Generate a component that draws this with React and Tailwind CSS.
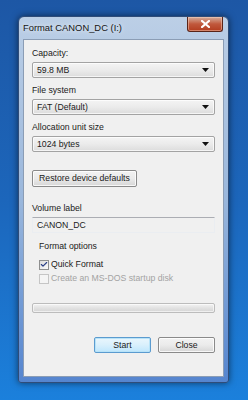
import { Check } from 'lucide-react';

const font = { fontFamily: '"Liberation Sans", Arial, sans-serif' };

const Label = ({ children, className = '' }) => (
    <div className={`h-[11px] leading-[11px] text-[8.7px] text-[#1a1a1a] whitespace-nowrap ${className}`}>
        {children}
    </div>
);

const Select = ({ value }) => (
    <div className="mt-[3px] h-[16px] flex items-center justify-between pl-[4px] pr-[5px] border border-[#a3a3a3] rounded-[2px] bg-gradient-to-b from-[#f4f4f4] via-[#ebebeb] to-[#dcdcdc] shadow-[inset_0_0_0_1px_rgba(255,255,255,0.7)]">
        <span className="text-[8.7px] leading-[11px] text-[#1a1a1a]">{value}</span>
        <svg width="7" height="4" viewBox="0 0 7 4">
            <path d="M0 0h7L3.5 4z" fill="#111" />
        </svg>
    </div>
);

const Button = ({ children, primary, className = '' }) => (
    <div
        className={`h-[16px] flex items-center justify-center rounded-[2px] border text-[8.7px] leading-[11px] text-[#1a1a1a] ${
            primary
                ? 'border-[#5b9bcf] bg-gradient-to-b from-[#eaf6fd] via-[#d9f0fc] to-[#bee6fd] shadow-[inset_0_0_0_1px_#b8e3f8]'
                : 'border-[#8a8a8a] bg-gradient-to-b from-[#f2f2f2] via-[#ebebeb] to-[#d6d6d6] shadow-[inset_0_0_0_1px_rgba(255,255,255,0.8)]'
        } ${className}`}
    >
        {children}
    </div>
);

export default function App() {
    return (
        <div
            className="w-[248px] h-[400px] overflow-hidden bg-gradient-to-b from-[#1d57a5] via-[#1c66bb] to-[#1b80dc] pt-[16px] pl-[18px]"
            style={font}
        >
            {/* Window */}
            <div className="w-[211px] h-[367px] flex flex-col border border-[#2f4c78] rounded-t-[6px] rounded-b-[3px] bg-gradient-to-b from-[#bccfe6] via-[#9ab7dc] to-[#5585cf] shadow-[0_0_7px_rgba(0,0,0,0.55)]">
                {/* Title bar */}
                <div className="h-[22px] flex items-start justify-between pl-[4px] pr-[5px]">
                    <span className="mt-[5px] text-[9.4px] leading-[11px] text-[#151515] [text-shadow:0_0_5px_rgba(255,255,255,0.95)]">
                        Format CANON_DC (I:)
                    </span>
                    <div className="w-[36px] h-[15px] flex items-center justify-center rounded-b-[3px] border border-t-0 border-[#5a2418] bg-gradient-to-b from-[#d2ad9c] via-[#c0583c] to-[#b23c1e] shadow-[inset_0_0_0_1px_rgba(255,220,200,0.45)]">
                        <svg width="9" height="8" viewBox="0 0 9 8">
                            <path d="M1 1l7 6M8 1L1 7" stroke="#fff" strokeWidth="2.2" strokeLinecap="square" />
                        </svg>
                    </div>
                </div>

                {/* Client area */}
                <div className="mx-[4px] h-[338px] flex flex-col border border-[#8b9db5] bg-[#f0f0f0] px-[8px]">
                    <Label className="mt-[8px]">Capacity:</Label>
                    <Select value="59.8 MB" />
                    <Label className="mt-[7px]">File system</Label>
                    <Select value="FAT (Default)" />
                    <Label className="mt-[7px]">Allocation unit size</Label>
                    <Select value="1024 bytes" />

                    <Button className="mt-[18px] w-[105px] h-[17px]">Restore device defaults</Button>

                    <Label className="mt-[16px]">Volume label</Label>
                    <div className="mt-[3px] h-[16px] flex items-center pl-[4px] border border-[#eaedf1] border-t-[#abadb3] bg-[#f0f0f0]">
                        <span className="text-[8.7px] leading-[11px] text-[#1a1a1a]">CANON_DC</span>
                    </div>

                    <div className="pl-[7px] flex flex-col">
                        <Label className="mt-[8px]">Format options</Label>
                        <div className="mt-[7px] h-[11px] flex items-center gap-[2px]">
                            <div className="w-[10px] h-[10px] flex items-center justify-center border border-[#8e8f8f] bg-gradient-to-br from-[#dcdcdc] to-[#fbfbfb]">
                                <Check className="w-[9px] h-[9px] text-[#2a3f86]" strokeWidth={3.5} />
                            </div>
                            <Label>Quick Format</Label>
                        </div>
                        <div className="mt-[3px] h-[11px] flex items-center gap-[2px]">
                            <div className="w-[10px] h-[10px] border border-[#c5c5c5] bg-[#f4f4f4]" />
                            <Label className="!text-[#a3a3a3]">Create an MS-DOS startup disk</Label>
                        </div>
                    </div>

                    <div className="mt-[19px] h-[10px] rounded-[2px] border border-[#bcbcbc] bg-gradient-to-b from-[#f3f3f3] via-[#e2e2e2] to-[#d4d4d4] shadow-[inset_0_0_0_1px_rgba(255,255,255,0.6)]" />

                    <div className="mt-[24px] flex justify-end gap-[7px]">
                        <Button primary className="w-[57px]">Start</Button>
                        <Button className="w-[57px]">Close</Button>
                    </div>
                </div>
            </div>
        </div>
    );
}
